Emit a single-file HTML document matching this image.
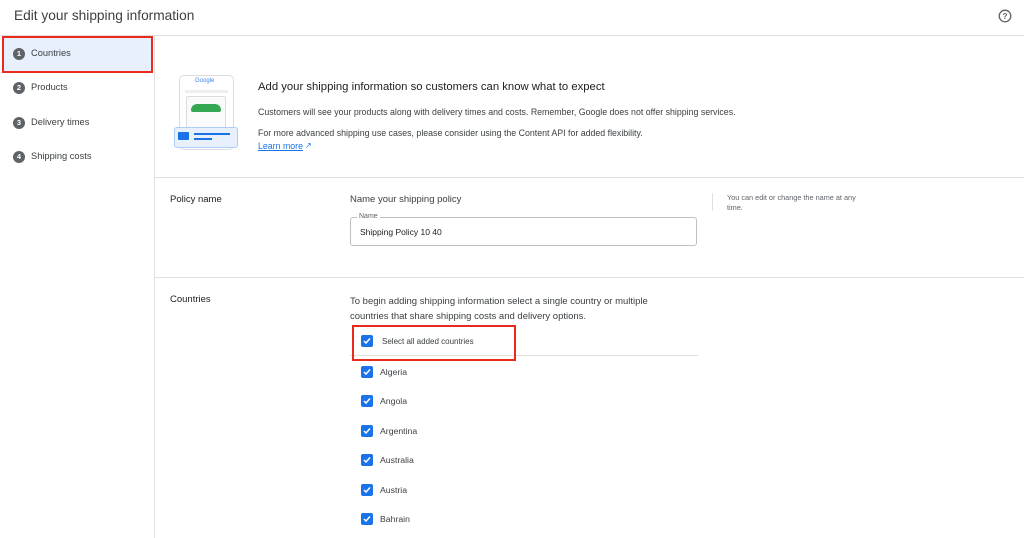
<!DOCTYPE html>
<html><head><style>
*{box-sizing:border-box;margin:0;padding:0}
body{width:1024px;height:538px;overflow:hidden;background:#fff;font-family:"Liberation Sans",sans-serif;color:#3c4043;position:relative}
.a{position:absolute}
.t{font-size:9px;color:#3c4043}
.cb{position:absolute;left:361px;width:12px;height:12px;background:#1a73e8;border-radius:2px}
.cb svg{position:absolute;left:1px;top:1px}
.cl{position:absolute;left:380px;font-size:8.7px;color:#3c4043}
.step{position:absolute;left:13px;width:12px;height:12px;border-radius:50%;background:#5f6368;color:#fff;font-size:7.5px;text-align:center;line-height:12px;font-weight:bold}
.sl{position:absolute;left:31px;font-size:9.3px;color:#3c4043}
</style></head><body>
<div class="a" style="left:14px;top:8px;font-size:13.7px;color:#3c4043">Edit your shipping information</div>
<svg class="a" style="left:998px;top:9px" width="14" height="14" viewBox="0 0 14 14"><circle cx="7" cy="7" r="5.8" fill="none" stroke="#5f6368" stroke-width="1.3"/><text x="7" y="10" font-size="8" text-anchor="middle" fill="#5f6368" font-family="Liberation Sans" font-weight="bold">?</text></svg>
<div class="a" style="left:0;top:35px;width:1024px;height:1px;background:#e0e0e0"></div>
<div class="a" style="left:154px;top:36px;width:1px;height:502px;background:#e0e0e0"></div>
<div class="a" style="left:3px;top:37px;width:148px;height:34px;background:#e8f0fe"></div>
<div class="a" style="left:2px;top:36px;width:151px;height:37px;border:2.5px solid #ea2a1c"></div>
<div class="step" style="top:48px">1</div><div class="sl" style="top:48px">Countries</div>
<div class="step" style="top:82px">2</div><div class="sl" style="top:82px">Products</div>
<div class="step" style="top:117px">3</div><div class="sl" style="top:117px">Delivery times</div>
<div class="step" style="top:151px">4</div><div class="sl" style="top:151px">Shipping costs</div>
<!-- illustration -->
<div class="a" style="left:179px;top:75px;width:55px;height:75px;border:1px solid #dadce0;border-radius:5px;background:#fff"></div>
<div class="a" style="left:195px;top:78px;font-size:6px;color:#4285f4">Google</div>
<div class="a" style="left:185px;top:90px;width:43px;height:3px;background:#eee"></div>
<div class="a" style="left:186px;top:96px;width:40px;height:40px;border:1px solid #dadce0;border-radius:2px;background:#fafafa"></div>
<div class="a" style="left:191px;top:104px;width:30px;height:8px;background:#34a853;border-radius:6px 6px 2px 2px"></div>
<div class="a" style="left:174px;top:127px;width:64px;height:21px;background:#e8f0fe;border:1px solid #aecbfa;border-radius:3px"></div>
<div class="a" style="left:178px;top:132px;width:11px;height:8px;background:#1a73e8;border-radius:1px"></div>
<div class="a" style="left:194px;top:133px;width:36px;height:2px;background:#1a73e8"></div>
<div class="a" style="left:194px;top:138px;width:18px;height:2px;background:#1a73e8"></div>
<div class="a" style="left:258px;top:81px;font-size:11.3px;color:#202124">Add your shipping information so customers can know what to expect</div>
<div class="a t" style="left:258px;top:107px;font-size:8.8px">Customers will see your products along with delivery times and costs. Remember, Google does not offer shipping services.</div>
<div class="a t" style="left:258px;top:128px;font-size:8.8px">For more advanced shipping use cases, please consider using the Content API for added flexibility.</div>
<div class="a" style="left:258px;top:141px;font-size:8.8px;color:#1a73e8;text-decoration:underline">Learn more</div>
<div class="a" style="left:305px;top:141px;font-size:8px;color:#1a73e8">↗</div>
<div class="a" style="left:155px;top:177px;width:869px;height:1px;background:#e0e0e0"></div>
<div class="a" style="left:170px;top:194px;font-size:9.5px;color:#202124">Policy name</div>
<div class="a" style="left:350px;top:194px;font-size:9.5px">Name your shipping policy</div>
<div class="a" style="left:712px;top:193px;width:1px;height:18px;background:#e0e0e0"></div>
<div class="a" style="left:727px;top:193px;font-size:7.3px;color:#5f6368;line-height:10px;width:140px">You can edit or change the name at any time.</div>
<div class="a" style="left:350px;top:217px;width:347px;height:29px;border:1px solid #bdc1c6;border-radius:3px"></div>
<div class="a" style="left:357px;top:213px;font-size:7px;color:#5f6368;background:#fff;padding:0 2px">Name</div>
<div class="a" style="left:360px;top:227px;font-size:8.5px;color:#202124">Shipping Policy 10 40</div>
<div class="a" style="left:155px;top:277px;width:869px;height:1px;background:#e0e0e0"></div>
<div class="a" style="left:170px;top:294px;font-size:9.5px;color:#202124">Countries</div>
<div class="a" style="left:350px;top:294px;font-size:9.5px;line-height:15px;width:325px">To begin adding shipping information select a single country or multiple countries that share shipping costs and delivery options.</div>
<div class="a" style="left:350px;top:355px;width:348px;height:1px;background:#e0e0e0"></div>
<div class="a" style="left:352px;top:325px;width:164px;height:36px;border:2.5px solid #ea2a1c"></div>
<div class="cb" style="top:335px"><svg width="10" height="10"><path d="M2 5l2 2 4-4.5" stroke="#fff" stroke-width="1.5" fill="none"/></svg></div><div class="cl" style="top:337px;left:382px;font-size:8px">Select all added countries</div>
<div class="cb" style="top:366px"><svg width="10" height="10"><path d="M2 5l2 2 4-4.5" stroke="#fff" stroke-width="1.5" fill="none"/></svg></div><div class="cl" style="top:367px">Algeria</div>
<div class="cb" style="top:395px"><svg width="10" height="10"><path d="M2 5l2 2 4-4.5" stroke="#fff" stroke-width="1.5" fill="none"/></svg></div><div class="cl" style="top:396px">Angola</div>
<div class="cb" style="top:425px"><svg width="10" height="10"><path d="M2 5l2 2 4-4.5" stroke="#fff" stroke-width="1.5" fill="none"/></svg></div><div class="cl" style="top:426px">Argentina</div>
<div class="cb" style="top:454px"><svg width="10" height="10"><path d="M2 5l2 2 4-4.5" stroke="#fff" stroke-width="1.5" fill="none"/></svg></div><div class="cl" style="top:455px">Australia</div>
<div class="cb" style="top:484px"><svg width="10" height="10"><path d="M2 5l2 2 4-4.5" stroke="#fff" stroke-width="1.5" fill="none"/></svg></div><div class="cl" style="top:485px">Austria</div>
<div class="cb" style="top:513px"><svg width="10" height="10"><path d="M2 5l2 2 4-4.5" stroke="#fff" stroke-width="1.5" fill="none"/></svg></div><div class="cl" style="top:514px">Bahrain</div>
</body></html>
